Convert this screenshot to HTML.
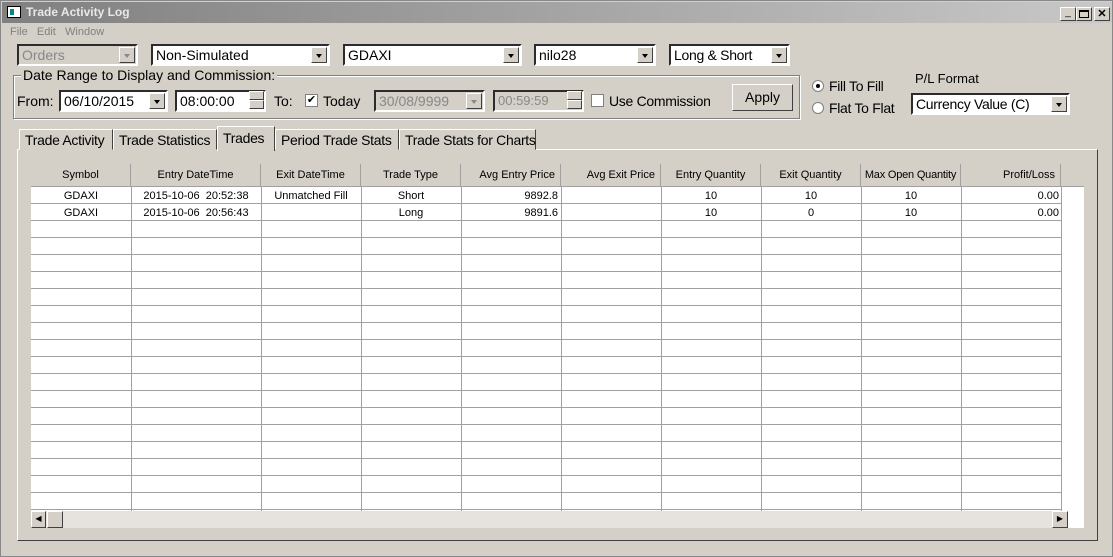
<!DOCTYPE html><html><head><style>
*{box-sizing:border-box;margin:0;padding:0}
body{width:1113px;height:557px;background:#d4d0c8;font-family:"Liberation Sans",Arial,sans-serif;position:relative;overflow:hidden;border:1px solid #888}
.a{position:absolute}
.t{font-size:14px;color:#000;white-space:nowrap}
.cb{position:absolute;height:22px;background:#fff;border:2px inset #eee;border-color:#808080 #fff #fff #808080;font-size:14px;padding:1px 3px;white-space:nowrap;overflow:hidden}
.cb.d{background:#d4d0c8;color:#888}
.ar{position:absolute;right:1px;top:1px;width:16px;height:16px;background:#d4d0c8;border:1px solid;border-color:#fff #404040 #404040 #fff}
.ar:after{content:"";position:absolute;left:4px;top:6px;border:3px solid transparent;border-top:4px solid #000;border-bottom:0}
.ar.d:after{border-top-color:#888}
.tab{position:absolute;top:128px;height:21px;font-size:14px;padding:2px 5px;border:1px solid;border-color:#fff #404040 transparent #fff;background:#d4d0c8;white-space:nowrap;letter-spacing:-0.3px}
.grid{position:absolute;left:30px;top:163px;width:1053px;height:364px;background:#fff;overflow:hidden}
.hd{position:absolute;top:0;height:23px;font-size:11px;background:#d4d0c8;border-right:1px solid #a0a0a0;border-bottom:1px solid #a0a0a0;padding-top:5px;white-space:nowrap}
.c{position:absolute;font-size:11px}
.sp{position:absolute;width:15px;height:9px;background:#d4d0c8;border:1px solid;border-color:#fff #404040 #404040 #fff}
</style></head><body>
<div class="a" style="left:1px;top:1px;width:1110px;height:21px;background:linear-gradient(90deg,#808080,#c8c8c8)"></div>
<div class="a" style="left:6px;top:5px;width:14px;height:12px;background:#fff;border:1px solid #000"><div style="margin:2px;width:4px;height:6px;background:#088"></div></div>
<div class="a" style="left:25px;top:4px;color:#e8e8e8;font-weight:bold;font-size:12px">Trade Activity Log</div>
<div class="a" style="left:1059px;top:6px;width:16px;height:14px;background:#d4d0c8;border:1px solid;border-color:#fff #404040 #404040 #fff;font-size:10px;text-align:center;line-height:10px">_</div>
<div class="a" style="left:1075px;top:6px;width:16px;height:14px;background:#d4d0c8;border:1px solid;border-color:#fff #404040 #404040 #fff"><div style="margin:2px;width:10px;height:8px;border:1px solid #000;border-top-width:2px"></div></div>
<div class="a" style="left:1093px;top:6px;width:16px;height:14px;background:#d4d0c8;border:1px solid;border-color:#fff #404040 #404040 #fff;font-size:11px;text-align:center;line-height:12px;font-weight:bold">✕</div>
<div class="a" style="left:9px;top:25px;font-size:11px;color:#808080">File&nbsp;&nbsp; Edit&nbsp;&nbsp; Window</div>

<div class="cb d" style="left:16px;top:43px;width:121px">Orders<div class="ar d"></div></div>
<div class="cb" style="left:150px;top:43px;width:179px">Non-Simulated<div class="ar"></div></div>
<div class="cb" style="left:342px;top:43px;width:179px">GDAXI<div class="ar"></div></div>
<div class="cb" style="left:533px;top:43px;width:122px">nilo28<div class="ar"></div></div>
<div class="cb" style="left:668px;top:43px;width:121px;letter-spacing:-0.3px">Long &amp; Short<div class="ar"></div></div>

<div class="a" style="left:12px;top:74px;width:787px;height:44px;border:1px solid #808080;box-shadow:1px 1px 0 #fff inset,1px 1px 0 #fff"></div>
<div class="a t" style="left:20px;top:66px;background:#d4d0c8;padding:0 2px">Date Range to Display and Commission:</div>
<div class="a t" style="left:16px;top:92px">From:</div>
<div class="cb" style="left:58px;top:89px;width:109px">06/10/2015<div class="ar"></div></div>
<div class="cb" style="left:174px;top:89px;width:91px">08:00:00</div>
<div class="sp" style="left:248px;top:90px"></div><div class="sp" style="left:248px;top:99px"></div>
<div class="a t" style="left:273px;top:92px">To:</div>
<div class="a" style="left:304px;top:93px;width:13px;height:13px;background:#fff;border:1px solid #808080;font-size:11px;line-height:11px;text-align:center">✔</div>
<div class="a t" style="left:322px;top:92px">Today</div>
<div class="cb d" style="left:373px;top:89px;width:111px">30/08/9999<div class="ar d"></div></div>
<div class="cb d" style="left:492px;top:89px;width:91px;font-size:13px">00:59:59</div>
<div class="sp" style="left:566px;top:90px"></div><div class="sp" style="left:566px;top:99px"></div>
<div class="a t" style="left:608px;top:92px;letter-spacing:-0.3px">Use Commission</div>
<div class="a" style="left:590px;top:93px;width:13px;height:13px;background:#fff;border:1px solid #808080"></div>
<div class="a t" style="left:731px;top:83px;width:61px;height:27px;border:1px solid;border-color:#fff #404040 #404040 #fff;text-align:center;padding-top:4px">Apply</div>

<div class="a" style="left:811px;top:79px;width:12px;height:12px;border-radius:50%;background:#fff;border:1px solid #808080"><div style="margin:3px;width:4px;height:4px;border-radius:50%;background:#000"></div></div>
<div class="a t" style="left:828px;top:77px;letter-spacing:-0.3px">Fill To Fill</div>
<div class="a" style="left:811px;top:101px;width:12px;height:12px;border-radius:50%;background:#fff;border:1px solid #808080"></div>
<div class="a t" style="left:828px;top:99px;letter-spacing:-0.3px">Flat To Flat</div>
<div class="a t" style="left:914px;top:70px;font-size:13px">P/L Format</div>
<div class="cb" style="left:910px;top:92px;width:159px;letter-spacing:-0.3px">Currency Value (C)<div class="ar"></div></div>

<div class="a" style="left:16px;top:148px;width:1081px;height:392px;border:1px solid;border-color:#fff #404040 #404040 #fff"></div>
<div class="tab" style="left:18px;width:94px">Trade Activity</div>
<div class="tab" style="left:112px;width:104px">Trade Statistics</div>
<div class="tab" style="left:216px;top:125px;height:25px;width:58px;border-bottom:none;padding-top:3px">Trades</div>
<div class="tab" style="left:274px;width:124px">Period Trade Stats</div>
<div class="tab" style="left:398px;width:137px">Trade Stats for Charts</div>

<div class="grid">
<div class="hd" style="left:0;width:100px;text-align:center">Symbol</div>
<div class="hd" style="left:100px;width:130px;text-align:center">Entry DateTime</div>
<div class="hd" style="left:230px;width:100px;text-align:center">Exit DateTime</div>
<div class="hd" style="left:330px;width:100px;text-align:center">Trade Type</div>
<div class="hd" style="left:430px;width:100px;text-align:right;padding-right:5px">Avg Entry Price</div>
<div class="hd" style="left:530px;width:100px;text-align:right;padding-right:5px">Avg Exit Price</div>
<div class="hd" style="left:630px;width:100px;text-align:center">Entry Quantity</div>
<div class="hd" style="left:730px;width:100px;text-align:center">Exit Quantity</div>
<div class="hd" style="left:830px;width:100px;text-align:center;letter-spacing:-0.2px">Max Open Quantity</div>
<div class="hd" style="left:930px;width:100px;text-align:right;padding-right:5px">Profit/Loss</div>
<div class="hd" style="left:1030px;width:23px;border-right:none"></div>
<svg class="a" style="left:0;top:23px" width="1053" height="324">
<g stroke="#a0a0a0" stroke-width="1">
<path d="M100.5 0V324M230.5 0V324M330.5 0V324M430.5 0V324M530.5 0V324M630.5 0V324M730.5 0V324M830.5 0V324M930.5 0V324M1030.5 0V324"/>
<path d="M0 16.5H1030M0 33.5H1030M0 50.5H1030M0 67.5H1030M0 84.5H1030M0 101.5H1030M0 118.5H1030M0 135.5H1030M0 152.5H1030M0 169.5H1030M0 186.5H1030M0 203.5H1030M0 220.5H1030M0 237.5H1030M0 254.5H1030M0 271.5H1030M0 288.5H1030M0 305.5H1030M0 322.5H1030"/>
</g></svg>
<div class="c" style="left:0;width:100px;top:26px;text-align:center">GDAXI</div>
<div class="c" style="left:100px;width:130px;top:26px;text-align:center">2015-10-06&nbsp; 20:52:38</div>
<div class="c" style="left:230px;width:100px;top:26px;text-align:center">Unmatched Fill</div>
<div class="c" style="left:330px;width:100px;top:26px;text-align:center">Short</div>
<div class="c" style="left:430px;width:97px;top:26px;text-align:right">9892.8</div>
<div class="c" style="left:630px;width:100px;top:26px;text-align:center">10</div>
<div class="c" style="left:730px;width:100px;top:26px;text-align:center">10</div>
<div class="c" style="left:830px;width:100px;top:26px;text-align:center">10</div>
<div class="c" style="left:930px;width:98px;top:26px;text-align:right">0.00</div>
<div class="c" style="left:0;width:100px;top:43px;text-align:center">GDAXI</div>
<div class="c" style="left:100px;width:130px;top:43px;text-align:center">2015-10-06&nbsp; 20:56:43</div>
<div class="c" style="left:330px;width:100px;top:43px;text-align:center">Long</div>
<div class="c" style="left:430px;width:97px;top:43px;text-align:right">9891.6</div>
<div class="c" style="left:630px;width:100px;top:43px;text-align:center">10</div>
<div class="c" style="left:730px;width:100px;top:43px;text-align:center">0</div>
<div class="c" style="left:830px;width:100px;top:43px;text-align:center">10</div>
<div class="c" style="left:930px;width:98px;top:43px;text-align:right">0.00</div>
<div class="a" style="left:0;top:347px;width:1037px;height:17px;background:#e6e3de"></div>
<div class="a" style="left:0;top:347px;width:15px;height:17px;background:#d4d0c8;border:1px solid;border-color:#fff #404040 #404040 #fff;font-size:8px;line-height:14px;text-align:center">◀</div>
<div class="a" style="left:16px;top:347px;width:16px;height:17px;background:#d4d0c8;border:1px solid;border-color:#fff #404040 #404040 #fff"></div>
<div class="a" style="left:1021px;top:347px;width:16px;height:17px;background:#d4d0c8;border:1px solid;border-color:#fff #404040 #404040 #fff;font-size:8px;line-height:14px;text-align:center">▶</div>
</div>
</body></html>
